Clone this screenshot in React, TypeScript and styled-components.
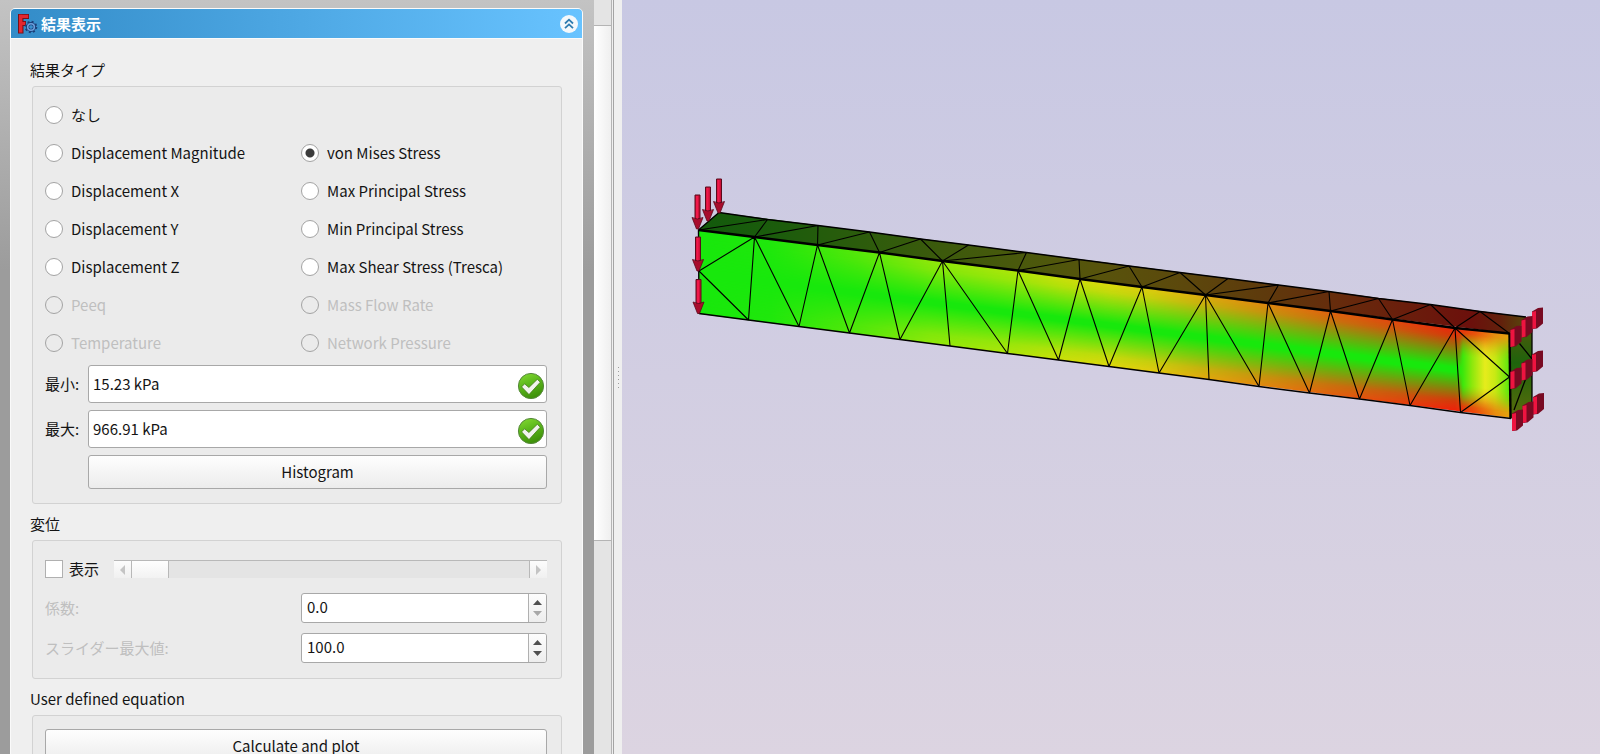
import React, { useId, useState } from "react";
import styled, { createGlobalStyle } from "styled-components";

const GlobalStyle = createGlobalStyle`
  * { box-sizing: border-box; }
  body {
    margin: 0;
    background: #efefef;
    color: #141414;
    font: 15px/20px "Noto Sans CJK JP", sans-serif;
  }
  button, input { font: inherit; color: inherit; margin: 0; }
`;

const Shell = styled.div`
  display: flex;
  height: 100vh;
  overflow: hidden;
`;

const Dock = styled.aside`
  flex: 0 0 594px;
  padding: 8px 11px 0 10px;
  overflow: hidden;
  background: linear-gradient(#c3c3c3, #9c9c9c 270px);
`;

const TaskBox = styled.section`
  border: 1px solid #fafafa;
  border-radius: 5px 5px 0 0;
  background: #efefef;
`;

const TaskHeader = styled.header`
  display: flex;
  align-items: center;
  gap: 3px;
  height: 30px;
  padding: 0 4px 0 6px;
  border-bottom: 1px solid #fafafa;
  border-radius: 4px 4px 0 0;
  background: linear-gradient(90deg, #338cc8, #68c3ff);
`;

const TaskTitle = styled.h1`
  flex: 1;
  margin: 0;
  color: #fff;
  font-size: 15px;
  line-height: 20px;
  font-weight: 700;
`;

const CollapseButton = styled.button`
  display: grid;
  place-items: center;
  width: 18px;
  height: 18px;
  padding: 0;
  border: 0;
  border-radius: 50%;
  background: #f4f8fb;
`;

const TaskBody = styled.div`
  display: flex;
  flex-direction: column;
  gap: 10px;
  padding: 21px 20px 20px;
`;

const GroupTitle = styled.h2`
  margin: 0 0 6px -1px;
  font-size: 15px;
  line-height: 20px;
  font-weight: 400;
`;

const GroupFrame = styled.div<{ $compact?: boolean }>`
  margin-left: 1px;
  padding: ${(p) => (p.$compact ? 13 : 18)}px 14px 14px 12px;
  border: 1px solid #d2d2d2;
  border-radius: 3px;
  background: #ebebeb;
`;

const RadioGrid = styled.div`
  display: grid;
  grid-template-columns: 1fr 1fr;
  gap: 18px 10px;
  margin-bottom: 12px;
`;

const Choice = styled.label<{ $off?: boolean; $wide?: boolean; $tight?: boolean }>`
  display: flex;
  align-items: center;
  gap: ${(p) => (p.$tight ? 6 : 8)}px;
  height: 20px;
  grid-column: ${(p) => (p.$wide ? "1 / -1" : "auto")};
  color: ${(p) => (p.$off ? "#bfbfbf" : "inherit")};
  white-space: nowrap;
`;

const Radio = styled.input.attrs({ type: "radio" })`
  appearance: none;
  width: 18px;
  height: 18px;
  border: 1px solid #a3a3a3;
  border-radius: 50%;
  background: #fff;
  &:checked {
    background: radial-gradient(circle, #3c3c3c 0 4px, #fff 5px);
  }
  &:disabled {
    background: transparent;
  }
`;

const Checkbox = styled.input.attrs({ type: "checkbox" })`
  appearance: none;
  width: 18px;
  height: 18px;
  border: 1px solid #b0b0b0;
  background: #fff;
  &:checked {
    background: radial-gradient(circle, #3c3c3c 0 4px, #fff 5px);
  }
`;

const ValueGrid = styled.div`
  display: grid;
  grid-template-columns: 43px 1fr;
  row-gap: 7px;
  align-items: center;
`;

const FieldLabel = styled.label<{ $off?: boolean }>`
  color: ${(p) => (p.$off ? "#bfbfbf" : "inherit")};
`;

const ValueBox = styled.div`
  display: flex;
  align-items: center;
  height: 38px;
  padding: 3px 1px 0 4px;
  border: 1px solid #a8a8a8;
  border-radius: 3px;
  background: #fff;
`;

const PlainInput = styled.input.attrs({ type: "text" })`
  flex: 1;
  min-width: 0;
  height: 26px;
  padding: 0 0 4px;
  border: 0;
  outline: 0;
  background: none;
`;

const PushButton = styled.button<{ $second?: boolean }>`
  grid-column: ${(p) => (p.$second ? 2 : "auto")};
  width: 100%;
  height: 34px;
  padding: 0;
  border: 1px solid #a8a8a8;
  border-radius: 3px;
  background: linear-gradient(#fefefe, #ececec);
`;

const ScrollRow = styled.div`
  display: flex;
  align-items: center;
  gap: 15px;
`;

const HScroll = styled.div`
  display: flex;
  flex: 1;
  height: 18px;
  border-top: 1px solid #b8b8b8;
  background: #e4e4e4;
`;

const HScrollArrow = styled.button`
  display: grid;
  place-items: center;
  width: 17px;
  height: 17px;
  padding: 0;
  border: 0;
  background: linear-gradient(#fcfcfc, #f0f0f0);
`;

const HScrollRange = styled.input.attrs({ type: "range" })`
  appearance: none;
  flex: 1;
  min-width: 0;
  height: 17px;
  border-right: 1px solid #b8b8b8;
  background: none;
  &::-webkit-slider-thumb {
    appearance: none;
    width: 38px;
    height: 17px;
    border: solid #b8b8b8;
    border-width: 0 1px;
    background: linear-gradient(#fefefe, #f2f2f2);
  }
`;

const SpinGrid = styled.div`
  display: grid;
  grid-template-columns: 1fr 1fr;
  gap: 10px;
  align-items: center;
  margin: 14px 0 1px;
`;

const SpinBox = styled.div`
  display: flex;
  align-items: center;
  height: 30px;
  padding-left: 5px;
  overflow: hidden;
  border: 1px solid #a8a8a8;
  border-radius: 3px;
  background: #fff;
`;

const SpinArrows = styled.div`
  display: flex;
  flex-direction: column;
  align-self: stretch;
  width: 18px;
  border-left: 1px solid #b0b0b0;
  background: linear-gradient(#fdfdfd, #ededed);
`;

const SpinArrow = styled.button<{ $down?: boolean }>`
  display: flex;
  flex: 1;
  justify-content: center;
  align-items: ${(p) => (p.$down ? "flex-start" : "flex-end")};
  padding: 3px 0;
  border: 0;
  background: none;
`;

const VScroll = styled.div`
  display: flex;
  flex: 0 0 18px;
  flex-direction: column;
  border-right: 1px solid #b4b4b4;
  background: #e4e4e4;
`;

const VThumb = styled.div`
  flex: 0 0 68.5%;
  margin-top: 25px;
  border: solid #b4b4b4;
  border-width: 1px 0;
  background: linear-gradient(90deg, #fff, #efefef);
`;

const Splitter = styled.div`
  display: flex;
  flex: 0 0 10px;
  flex-direction: column;
  align-items: center;
  justify-content: center;
  gap: 3px;
  padding-left: 3px;
  background: linear-gradient(90deg, #efefef 1px, #a4a4a4 1px 2px, #efefef 2px);
`;

const Dot = styled.i`
  width: 1px;
  height: 1px;
  background: #9c9c9c;
`;

const Viewport = styled.main`
  flex: 1;
  min-width: 0;
  background: linear-gradient(#c8c8e3, #dcd4e1);
`;

const Scene = styled.svg`
  display: block;
  width: 100%;
  height: 100%;
`;

const AppIcon = () => (
  <svg width="21" height="20" viewBox="0 0 21 20" aria-hidden="true">
    <g fill="#7a1018">
      <rect x="1" y="0" width="11" height="5" />
      <rect x="1" y="7" width="8" height="5" />
      <rect x="1" y="0" width="5.5" height="19.5" />
    </g>
    <g fill="#e4262e">
      <rect x="2" y="0.8" width="9.2" height="3.2" />
      <rect x="2" y="8" width="6.2" height="3" />
      <rect x="2" y="0.8" width="3.4" height="17.8" />
    </g>
    <circle cx="14" cy="13" r="5.2" fill="none" stroke="#1c3f78" strokeWidth="2.2" strokeDasharray="1.9 2.18" />
    <circle cx="14" cy="13" r="3.4" fill="none" stroke="#1c3f78" strokeWidth="3.2" />
    <circle cx="14" cy="13" r="3.3" fill="none" stroke="#6c9fdc" strokeWidth="1.6" />
    <circle cx="14" cy="13" r="1.6" fill="#3b8fce" />
  </svg>
);

const DoubleChevron = () => (
  <svg width="12" height="12" viewBox="0 0 12 12" fill="none" stroke="#2f7cb0" strokeWidth="1.8" aria-hidden="true">
    <path d="M2 5.5 6 1.7 10 5.5M2 10.2 6 6.4 10 10.2" />
  </svg>
);

const ValidIcon = () => {
  const id = useId();
  return (
    <svg width="28" height="28" viewBox="0 0 28 28" aria-hidden="true">
      <defs>
        <linearGradient id={id} x1="0" y1="0" x2="0.4" y2="1">
          <stop offset="0" stopColor="#86dc34" />
          <stop offset="0.5" stopColor="#5cb81c" />
          <stop offset="1" stopColor="#3f920a" />
        </linearGradient>
      </defs>
      <circle cx="14" cy="14" r="12.6" fill={`url(#${id})`} stroke="#56883c" />
      <path
        d="M4.6 14.9 7.6 11.8 11.9 15.5 20.3 7.3 23.3 10.2 12 22.6Z"
        fill="#f1f3ee"
        stroke="#417c17"
        strokeWidth="0.8"
        strokeLinejoin="round"
      />
    </svg>
  );
};

const Triangle = ({ dir, color }: { dir: "up" | "down" | "left" | "right"; color: string }) => {
  const shape = {
    up: "M0 5 4.5 0 9 5Z",
    down: "M0 0 4.5 5 9 0Z",
    left: "M5 0 0 5 5 10Z",
    right: "M0 0 5 5 0 10Z",
  }[dir];
  const vertical = dir === "up" || dir === "down";
  return (
    <svg width={vertical ? 9 : 5} height={vertical ? 5 : 10} fill={color} aria-hidden="true">
      <path d={shape} />
    </svg>
  );
};

type Pt = [number, number];

const topLeft: Pt = [698.5, 230];
const topRight: Pt = [1509.5, 333.5];
const leftMid: Pt = [699, 271];
const rightMid: Pt = [1509.5, 377];

// Nodes of the ridge between the top and the front face.
const ridge: Pt[] = [
  topLeft, [754.5, 237], [817.5, 245], [879.5, 252.5], [942.5, 261], [1018, 270.5], [1080, 279], [1142, 287],
  [1205.5, 295], [1268, 303], [1330.5, 311], [1392.5, 319.5], [1455, 328], topRight,
];
const base: Pt[] = [
  [699, 313.5], [748.5, 320], [799, 326.5], [849.5, 333], [900, 339.5], [950, 346], [1007.5, 353.5], [1058.5, 360],
  [1109, 366.5], [1159, 373], [1209, 379.5], [1259, 386.5], [1309.5, 393], [1359.5, 399], [1410, 405.5],
  [1460.5, 412.5], [1511, 418.5],
];
const back: Pt[] = [
  [719, 212.5], [767.5, 219.5], [818, 225.5], [869.5, 232], [920.5, 239], [968.5, 245], [1026.5, 252.5],
  [1079, 259.5], [1129, 266], [1180, 272.5], [1228, 278.5], [1278.5, 285], [1329, 291.5], [1378.5, 298.5],
  [1430.5, 304.5], [1480, 311.5], [1526, 317],
];

// Pairs of [ridge node, node of the opposite edge].
const frontEdges: [number, number][] = [
  [1, 1], [1, 2], [2, 2], [2, 3], [3, 3], [3, 4], [4, 4], [4, 5], [4, 6], [5, 6], [5, 7], [6, 7], [6, 8], [7, 8],
  [7, 9], [8, 9], [8, 10], [8, 11], [9, 11], [9, 12], [10, 12], [10, 13], [11, 13], [11, 14], [12, 14], [12, 15],
];
const topEdges: [number, number][] = [
  [0, 1], [1, 1], [1, 2], [2, 2], [2, 3], [3, 3], [3, 4], [4, 4], [4, 5], [4, 6], [5, 6], [5, 7], [6, 7], [6, 8],
  [7, 8], [7, 9], [8, 9], [8, 10], [8, 11], [9, 11], [9, 12], [10, 12], [10, 13], [11, 13], [11, 14], [12, 14],
  [12, 15], [13, 15],
];

const seg = (a: Pt, b: Pt) => `M${a.join(" ")}L${b.join(" ")}`;
const poly = (pts: Pt[]) => pts.map((p) => p.join(",")).join(" ");

const meshPath = [
  ...frontEdges.map(([r, b]) => seg(ridge[r], base[b])),
  ...topEdges.map(([r, b]) => seg(ridge[r], back[b])),
  seg(leftMid, ridge[1]),
  seg(leftMid, base[1]),
  seg(ridge[12], rightMid),
  seg(base[15], rightMid),
].join("");

const edgeStress: [number, string][] = [
  [699, "#18e80c"], [770, "#20e80c"], [860, "#58e80a"], [930, "#90e80a"], [1010, "#aee60a"], [1060, "#cce00a"],
  [1110, "#dfd80c"], [1150, "#e2cb0e"], [1205, "#e2a80e"], [1265, "#e2860e"], [1330, "#e4600e"], [1400, "#e8400e"],
  [1455, "#f0200a"], [1475, "#ee4a0c"], [1495, "#ea8a10"], [1510, "#eaa20e"],
];
const coreStress: [number, string][] = [
  [699, "#18e80c"], [1457, "#18e80c"], [1470, "#7ce80c"], [1485, "#e6ec1c"], [1497, "#b4ea10"], [1510, "#50e80c"],
];
const topStress: [number, string][] = [
  [699, "#125a0c"], [780, "#1c5c0c"], [860, "#2c5c0c"], [940, "#3c5a0c"], [1020, "#4a590c"], [1100, "#58530c"],
  [1180, "#5c480c"], [1260, "#5e3a0c"], [1330, "#662c0c"], [1400, "#6a1e0c"], [1465, "#6c100c"], [1495, "#62200c"],
  [1526, "#54500c"],
];

// Stress in the clamped end of the front face.
const clampStress: [number, string][] = [
  [1459, "#18e80c00"], [1463, "#3ce80c"], [1472, "#8ce80c"], [1485, "#e6ec1c"], [1495, "#c8ea14"], [1510, "#58e80c"],
];

const Stops = ({ list }: { list: [number, string][] }) => (
  <>
    {list.map(([x, color]) => (
      <stop key={x} offset={(x - list[0][0]) / (list[list.length - 1][0] - list[0][0])} stopColor={color} />
    ))}
  </>
);

const forces: Pt[] = [[719, 213], [708, 221], [697.5, 229], [698, 271], [698.5, 313.5]];

// A load arrow whose tip sits on the given node.
const ForceArrow = ({ tip: [x, y] }: { tip: Pt }) => (
  <g transform={`translate(${x} ${y})`}>
    <path d="M-2.5-34H2.5V-10H-2.5Z" fill="#cc1038" stroke="#5a0a1c" strokeWidth="1" />
    <path d="M-1.5-33H0.5V-10H-1.5Z" fill="#f0184a" />
    <path d="M-5.5-11.5Q0-8.5 5.5-11.5L1 0H-1Z" fill="#a80c2c" stroke="#5a0a1c" strokeWidth="0.8" />
  </g>
);

const supports: Pt[] = [
  [1532, 311.5], [1521.5, 320], [1510.5, 329.5],
  [1532, 354.5], [1521.5, 363], [1510.5, 371.5],
  [1533, 397], [1522.5, 405.5], [1512, 413.5],
];

const SupportBlock = ({ at: [x, y] }: { at: Pt }) => (
  <g transform={`translate(${x} ${y})`}>
    <path d="M0 0 6-3.5 11-4V12L5 17 0 17.5Z" fill="#780a22" />
    <path d="M0 0.5 4-0.5V16.5L0 17.5Z" fill="#ee1440" />
  </g>
);

const BeamScene = () => (
  <Scene viewBox="622 0 978 754" preserveAspectRatio="xMidYMid meet" role="img" aria-label="von Mises Stress">
    <defs>
      <linearGradient id="edge"><Stops list={edgeStress} /></linearGradient>
      <linearGradient id="core"><Stops list={coreStress} /></linearGradient>
      <linearGradient id="top"><Stops list={topStress} /></linearGradient>
      <linearGradient id="clamp"><Stops list={clampStress} /></linearGradient>
      <linearGradient id="fade" x2="0" y2="1">
        <stop offset="0" stopColor="#fff" stopOpacity="0" />
        <stop offset="0.12" stopColor="#fff" stopOpacity="0.14" />
        <stop offset="0.48" stopColor="#fff" />
        <stop offset="0.54" stopColor="#fff" />
        <stop offset="0.88" stopColor="#fff" stopOpacity="0.14" />
        <stop offset="1" stopColor="#fff" stopOpacity="0" />
      </linearGradient>
      <linearGradient id="wideFade" x2="0" y2="1">
        <stop offset="0.06" stopColor="#fff" stopOpacity="0" />
        <stop offset="0.34" stopColor="#fff" />
        <stop offset="0.68" stopColor="#fff" />
        <stop offset="0.94" stopColor="#fff" stopOpacity="0" />
      </linearGradient>
      <linearGradient id="side" x2="0" y2="1">
        <stop offset="0" stopColor="#5a560c" />
        <stop offset="0.45" stopColor="#1e640c" />
        <stop offset="1" stopColor="#5c6c0c" />
      </linearGradient>
      <mask id="band" maskContentUnits="objectBoundingBox">
        <rect width="1" height="1" fill="url(#fade)" />
      </mask>
      <mask id="wideBand" maskContentUnits="objectBoundingBox">
        <rect width="1" height="1" fill="url(#wideFade)" />
      </mask>
    </defs>

    <polygon points={poly([back[0], back[16], [1532, 318], topRight, topLeft])} fill="url(#top)" />
    <polygon points={poly([topRight, [1532, 318], [1532, 403], base[16]])} fill="url(#side)" />
    <g transform="translate(699 230) skewY(7.29)">
      <rect width="811" height="84" fill="url(#edge)" />
      <rect width="811" height="84" fill="url(#core)" mask="url(#band)" />
      <rect x="760" width="51" height="84" fill="url(#clamp)" mask="url(#wideBand)" />
    </g>

    <g fill="none" stroke="#000" strokeLinejoin="round">
      <path d={meshPath} strokeWidth="1.1" />
      <path d="M1519.5 343.5 1532 359M1526 378 1514 410" strokeWidth="1.3" />
      <polyline points={poly(ridge)} strokeWidth="2.4" />
      <polyline points={poly(back)} strokeWidth="1.5" />
      <polyline points={poly(base)} strokeWidth="1.5" />
      <path d={seg(back[0], topLeft) + seg(topLeft, base[0])} strokeWidth="1.4" />
      <path d="M1509.5 333 1510.5 418.5" strokeWidth="2.4" />
      <path d="M1532 320V403" strokeWidth="1.3" />
    </g>

    {forces.map((tip) => <ForceArrow key={tip.join()} tip={tip} />)}
    {supports.map((at) => <SupportBlock key={at.join()} at={at} />)}
  </Scene>
);

type Option = { name: string; off?: boolean; wide?: boolean };

const options: Option[] = [
  { name: "なし", wide: true },
  { name: "Displacement Magnitude" },
  { name: "von Mises Stress" },
  { name: "Displacement X" },
  { name: "Max Principal Stress" },
  { name: "Displacement Y" },
  { name: "Min Principal Stress" },
  { name: "Displacement Z" },
  { name: "Max Shear Stress (Tresca)" },
  { name: "Peeq", off: true },
  { name: "Mass Flow Rate", off: true },
  { name: "Temperature", off: true },
  { name: "Network Pressure", off: true },
];

const Group = ({ title, compact, children }: { title: string; compact?: boolean; children: React.ReactNode }) => (
  <section>
    <GroupTitle>{title}</GroupTitle>
    <GroupFrame $compact={compact}>{children}</GroupFrame>
  </section>
);

const ValueField = ({ label, value }: { label: string; value: string }) => {
  const id = useId();
  return (
    <>
      <FieldLabel htmlFor={id}>{label}</FieldLabel>
      <ValueBox>
        <PlainInput id={id} defaultValue={value} />
        <ValidIcon />
      </ValueBox>
    </>
  );
};

const SpinField = ({ label, initial }: { label: string; initial: number }) => {
  const id = useId();
  const [value, setValue] = useState(initial);
  return (
    <>
      <FieldLabel htmlFor={id} $off>{label}</FieldLabel>
      <SpinBox>
        <PlainInput id={id} value={value.toFixed(1)} onChange={(e) => setValue(Number(e.target.value) || 0)} />
        <SpinArrows>
          <SpinArrow aria-label={`${label} +`} onClick={() => setValue(value + 1)}>
            <Triangle dir="up" color="#505050" />
          </SpinArrow>
          <SpinArrow $down aria-label={`${label} -`} disabled={value <= 0} onClick={() => setValue(value - 1)}>
            <Triangle dir="down" color={value <= 0 ? "#a8a8a8" : "#505050"} />
          </SpinArrow>
        </SpinArrows>
      </SpinBox>
    </>
  );
};

export default function App() {
  const [result, setResult] = useState("von Mises Stress");
  return (
    <>
      <GlobalStyle />
      <Shell>
        <Dock>
          <TaskBox>
            <TaskHeader>
              <AppIcon />
              <TaskTitle>結果表示</TaskTitle>
              <CollapseButton aria-label="結果表示">
                <DoubleChevron />
              </CollapseButton>
            </TaskHeader>
            <TaskBody>
              <Group title="結果タイプ">
                <RadioGrid role="radiogroup" aria-label="結果タイプ">
                  {options.map(({ name, off, wide }) => (
                    <Choice key={name} $off={off} $wide={wide}>
                      <Radio name="result" disabled={off} checked={result === name} onChange={() => setResult(name)} />
                      {name}
                    </Choice>
                  ))}
                </RadioGrid>
                <ValueGrid>
                  <ValueField label="最小:" value="15.23 kPa" />
                  <ValueField label="最大:" value="966.91 kPa" />
                  <PushButton $second>Histogram</PushButton>
                </ValueGrid>
              </Group>

              <Group title="変位">
                <ScrollRow>
                  <Choice $tight>
                    <Checkbox />
                    表示
                  </Choice>
                  <HScroll>
                    <HScrollArrow disabled aria-label="−">
                      <Triangle dir="left" color="#c4c4c4" />
                    </HScrollArrow>
                    <HScrollRange disabled defaultValue={0} aria-label="変位" />
                    <HScrollArrow disabled aria-label="+">
                      <Triangle dir="right" color="#c4c4c4" />
                    </HScrollArrow>
                  </HScroll>
                </ScrollRow>
                <SpinGrid>
                  <SpinField label="係数:" initial={0} />
                  <SpinField label="スライダー最大値:" initial={100} />
                </SpinGrid>
              </Group>

              <Group title="User defined equation" compact>
                <PushButton>Calculate and plot</PushButton>
              </Group>
            </TaskBody>
          </TaskBox>
        </Dock>
        <VScroll>
          <VThumb />
        </VScroll>
        <Splitter>
          {[0, 1, 2, 3, 4, 5].map((n) => <Dot key={n} />)}
        </Splitter>
        <Viewport>
          <BeamScene />
        </Viewport>
      </Shell>
    </>
  );
}
